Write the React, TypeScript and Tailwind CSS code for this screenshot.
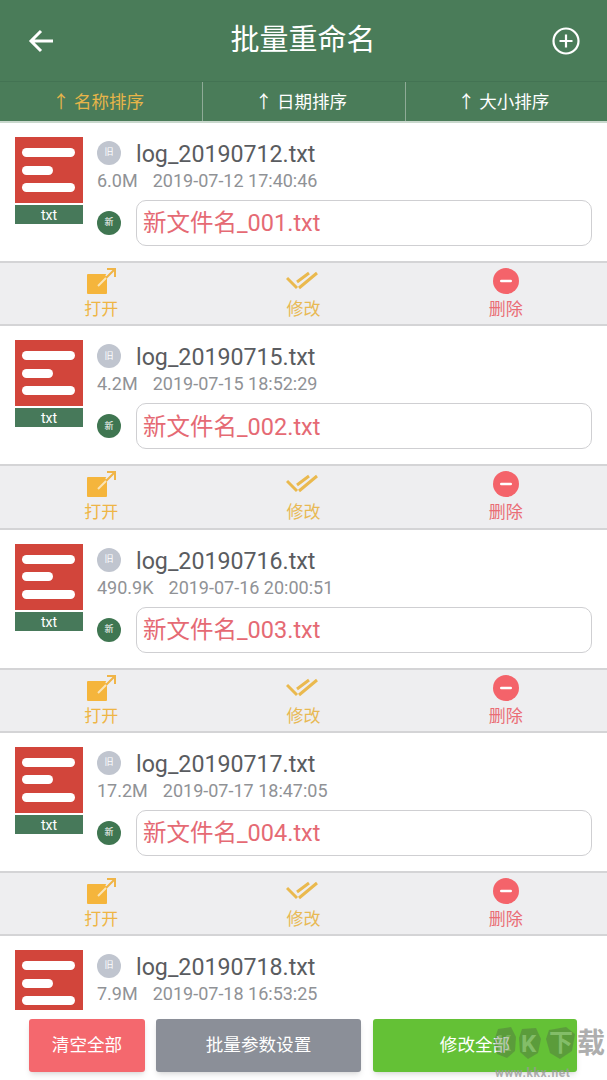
import React from 'react';

const files = [
  { name: 'log_20190712.txt', size: '6.0M', date: '2019-07-12 17:40:46', next: '新文件名_001.txt' },
  { name: 'log_20190715.txt', size: '4.2M', date: '2019-07-15 18:52:29', next: '新文件名_002.txt' },
  { name: 'log_20190716.txt', size: '490.9K', date: '2019-07-16 20:00:51', next: '新文件名_003.txt' },
  { name: 'log_20190717.txt', size: '17.2M', date: '2019-07-17 18:47:05', next: '新文件名_004.txt' },
  { name: 'log_20190718.txt', size: '7.9M', date: '2019-07-18 16:53:25', next: '' },
];

function TxtIcon({ label }: { label: boolean }) {
  return (
    <div className="w-[68px] shrink-0">
      <div className="h-[66px] bg-[#d2453b] flex flex-col justify-between px-[7px] py-[11px]">
        <div className="h-[9px] w-[53px] rounded-full bg-white" />
        <div className="h-[9px] w-[31px] rounded-full bg-white" />
        <div className="h-[9px] w-[53px] rounded-full bg-white" />
      </div>
      {label && <div className="mt-[2px] h-[19px] bg-[#47795a] text-white text-[14px] leading-[20px] text-center">txt</div>}
    </div>
  );
}

function Actions() {
  return (
    <div className="h-[65.25px] bg-[#eeeef0] border-y-2 border-[#d4d4d6] grid grid-cols-3 text-[17px]">
      <div className="flex flex-col items-center pt-[5px] text-[#eeb545]">
        <svg width="30" height="26" viewBox="0 0 30 26">
          <rect x="1" y="6" width="20" height="20" rx="1" fill="#f5b53c" />
          <path d="M21 9 29 1" fill="none" stroke="#eeeef0" strokeWidth="5" />
          <path d="M12 18 21 9" fill="none" stroke="#f9e4b8" strokeWidth="2" />
          <path d="M20 10 29 1M21 1h8v8" fill="none" stroke="#f0b548" strokeWidth="2" />
        </svg>
        <div className="leading-[22px] mt-[4px]">打开</div>
      </div>
      <div className="flex flex-col items-center pt-[5px] text-[#e8b954]">
        <svg width="34" height="26" viewBox="0 0 34 26">
          <path d="M1 10 11 20M13 20 31 5M11 14 23 5" fill="none" stroke="#eab94e" strokeWidth="3" />
        </svg>
        <div className="leading-[22px] mt-[4px]">修改</div>
      </div>
      <div className="flex flex-col items-center pt-[5px] text-[#ea6d75]">
        <svg width="26" height="26" viewBox="0 0 26 26">
          <circle cx="13" cy="13" r="13" fill="#f4636a" />
          <rect x="7" y="11.7" width="12" height="2.6" rx="1.3" fill="#fff" />
        </svg>
        <div className="leading-[22px] mt-[4px]">删除</div>
      </div>
    </div>
  );
}

function FileRow({ file }: { file: (typeof files)[number] }) {
  return (
    <div>
      <div className="h-[138px] bg-white flex pl-[15px] pr-[15px] pt-[14px]">
        <TxtIcon label={!!file.next} />
        <div className="ml-[14px] flex-1 min-w-0">
          <div className="flex items-center h-[32px]">
            <div className="w-[24px] h-[24px] rounded-full bg-[#c0c5cf] text-white text-[9px] flex items-center justify-center">旧</div>
            <div className="ml-[15px] pt-[2px] text-[23.2px] text-[#5a5c60] leading-[32px]">{file.name}</div>
          </div>
          <div className="flex h-[22px] items-center pt-[1px] text-[#909296] text-[18px] whitespace-pre">
            {file.size}
            <span className="ml-[15px]">{file.date}</span>
          </div>
          {file.next && (
            <div className="flex items-center mt-[9px]">
              <div className="w-[24px] h-[24px] rounded-full bg-[#3f7651] text-white text-[9px] flex items-center justify-center">新</div>
              <div className="ml-[15px] flex-1 h-[46px] rounded-[10px] border border-[#cfcfd2] pl-[6px] pt-[2px] flex items-center text-[23.5px] text-[#e56a74]">
                {file.next}
              </div>
            </div>
          )}
        </div>
      </div>
      {file.next && <Actions />}
    </div>
  );
}

function SortTab({ label, active, border }: { label: string; active?: boolean; border?: boolean }) {
  return (
    <div className={`flex items-center justify-center pt-[2px] pr-[6px] text-[17.5px] ${active ? 'text-[#e7b549]' : 'text-white'} ${border ? 'border-l border-[#8fab97]' : ''}`}>
      ↑ {label}
    </div>
  );
}

export default function App() {
  return (
    <div className="relative w-[607px] h-[1080px] overflow-hidden bg-white flex flex-col font-['Roboto','Noto_Sans_CJK_SC',sans-serif]">
      <div className="h-[81px] shrink-0 bg-[#4a7c59] flex items-center justify-between pl-[28px] pr-[27px] text-white">
        <svg width="26" height="26" viewBox="0 0 26 26" fill="none" stroke="#fff" strokeWidth="3">
          <path d="M25 13H3M13 3 3 13l10 10" />
        </svg>
        <div className="text-[29px]">批量重命名</div>
        <svg width="28" height="28" viewBox="0 0 28 28" fill="none" stroke="#fff" strokeWidth="2.2">
          <circle cx="14" cy="14" r="12.5" />
          <path d="M14 7.5v13M7.5 14h13" />
        </svg>
      </div>
      <div className="h-[42px] shrink-0 bg-[#4a7c59] border-t border-[#437353] border-b-2 border-b-[#c9d8cd] grid grid-cols-3">
        <SortTab label="名称排序" active />
        <SortTab label="日期排序" border />
        <SortTab label="大小排序" border />
      </div>
      <div className="h-[887px] shrink-0 overflow-hidden">
        {files.map(file => <FileRow key={file.name} file={file} />)}
      </div>
      <div className="flex-1 bg-white pl-[29px] pt-[9px] flex text-white text-[17.6px]">
        <div className="w-[116px] h-[53px] rounded-[3px] bg-[#f4686e] shadow-md flex items-center justify-center">清空全部</div>
        <div className="ml-[11px] w-[205px] h-[53px] rounded-[3px] bg-[#8b8f98] shadow-md flex items-center justify-center">批量参数设置</div>
        <div className="ml-[12px] w-[204px] h-[53px] rounded-[3px] bg-[#64c136] shadow-md flex items-center justify-center">修改全部</div>
      </div>

      {/* watermark */}
      <svg className="absolute left-[494px] top-[1027px]" width="82" height="33" viewBox="0 0 82 33">
        <path d="M4 2 17 0 22 10 21 24 13 31 3 27 0 14Z" fill="#4a4a4a" fillOpacity="0.3" />
        <path d="M28 2 42 1 47 12 44 26 34 32 26 25 25 11Z" fill="#4a4a4a" fillOpacity="0.3" />
        <path d="M55 3 72 0 81 7 78 24 66 32 56 26 52 12Z" fill="#4a4a4a" fillOpacity="0.3" />
      </svg>
      <div className="absolute left-[497px] top-[1030px] text-[22px] leading-[28px] font-bold text-[#9fd487]/40">K</div>
      <div className="absolute left-[521px] top-[1030px] text-[24px] leading-[28px] font-bold text-[#9fd487]/60">K</div>
      <div className="absolute left-[549px] top-[1029px] text-[24px] leading-[28px] font-bold text-[#9fd487]/60">下</div>
      <div className="absolute left-[577px] top-[1028px] text-[28px] leading-[32px] font-bold text-[#8a8a8a]/70">载</div>
      <div className="absolute left-[495px] top-[1066px] text-[12px] leading-[14px] font-bold tracking-[0.6px] text-[#9a9a9a]/80">www.kkx.net</div>
    </div>
  );
}
